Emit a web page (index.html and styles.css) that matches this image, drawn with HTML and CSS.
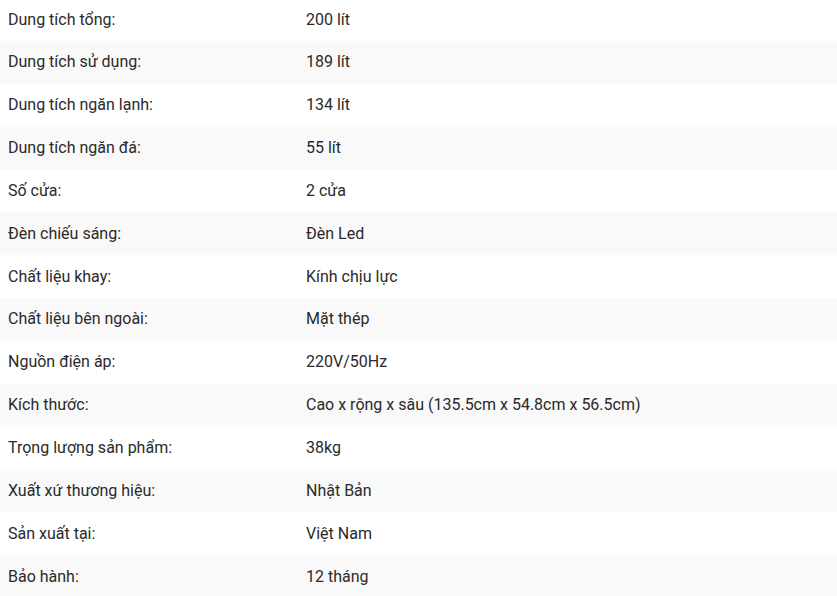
FILE: index.html
```html
<!DOCTYPE html>
<html lang="vi">
<head>
<meta charset="utf-8">
<link rel="stylesheet" href="styles.css">
</head>
<body>
<div class="specs">
  <div class="row"><div class="label">Dung tích tổng:</div><div class="value">200 lít</div></div>
  <div class="row"><div class="label">Dung tích sử dụng:</div><div class="value">189 lít</div></div>
  <div class="row"><div class="label">Dung tích ngăn lạnh:</div><div class="value">134 lít</div></div>
  <div class="row"><div class="label">Dung tích ngăn đá:</div><div class="value">55 lít</div></div>
  <div class="row"><div class="label">Số cửa:</div><div class="value">2 cửa</div></div>
  <div class="row"><div class="label">Đèn chiếu sáng:</div><div class="value">Đèn Led</div></div>
  <div class="row"><div class="label">Chất liệu khay:</div><div class="value">Kính chịu lực</div></div>
  <div class="row"><div class="label">Chất liệu bên ngoài:</div><div class="value">Mặt thép</div></div>
  <div class="row"><div class="label">Nguồn điện áp:</div><div class="value">220V/50Hz</div></div>
  <div class="row"><div class="label">Kích thước:</div><div class="value">Cao x rộng x sâu (135.5cm x 54.8cm x 56.5cm)</div></div>
  <div class="row"><div class="label">Trọng lượng sản phẩm:</div><div class="value">38kg</div></div>
  <div class="row"><div class="label">Xuất xứ thương hiệu:</div><div class="value">Nhật Bản</div></div>
  <div class="row"><div class="label">Sản xuất tại:</div><div class="value">Việt Nam</div></div>
  <div class="row"><div class="label">Bảo hành:</div><div class="value">12 tháng</div></div>
</div>
</body>
</html>
```
FILE: styles.css
```css
html, body {
  margin: 0;
  padding: 0;
  background: #fff;
}
body {
  font-family: Roboto, "Noto Sans", sans-serif;
  font-size: 16px;
  color: #2a2a2a;
  overflow: hidden;
}
.specs {
  margin-top: -1.86px;
}
.row {
  display: grid;
  grid-template-columns: 298px 1fr;
  height: 42.857px;
  align-items: center;
}
.row:nth-child(even) {
  background: #f9f9f9;
}
.label, .value {
  padding: 0 8px 1px;
}
```
